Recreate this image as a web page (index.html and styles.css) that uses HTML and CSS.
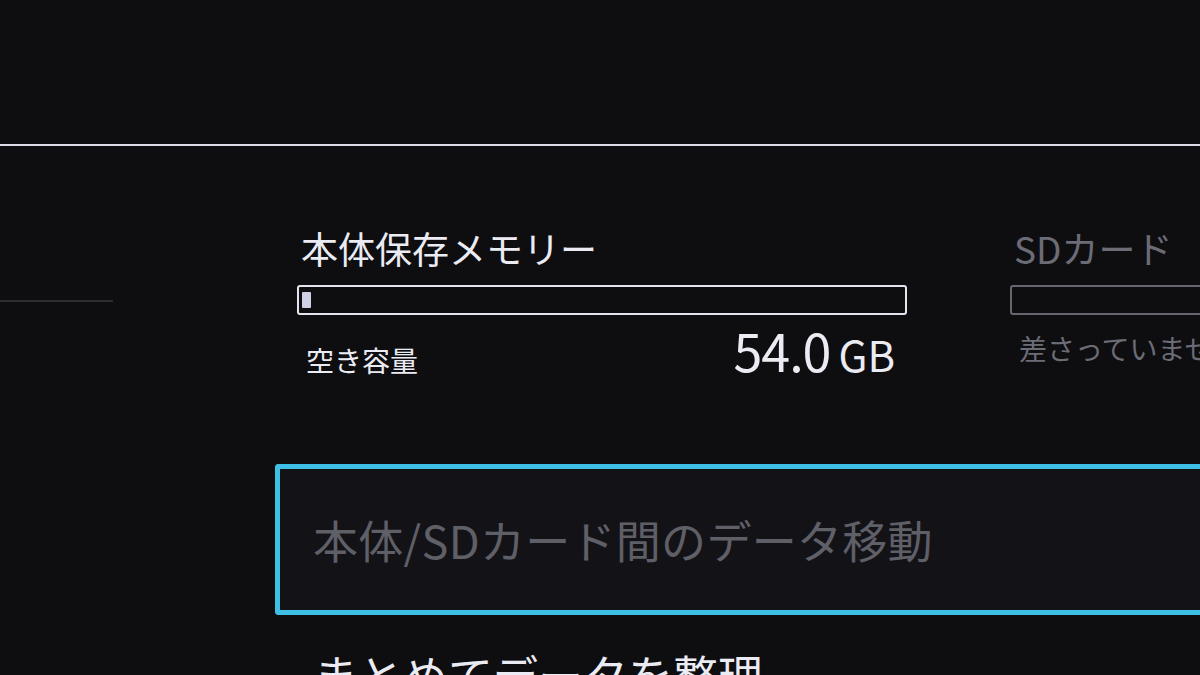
FILE: index.html
```html
<!DOCTYPE html>
<html lang="ja">
<head>
<meta charset="utf-8">
<link rel="stylesheet" href="styles.css">
</head>
<body>
<div class="screen">
  <header class="header"></header>
  <div class="rule"></div>
  <div class="content">
    <aside class="sidebar">
      <div class="side-divider"></div>
    </aside>
    <main class="main">
      <section class="storage">
        <div class="store">
          <div class="store-title">本体保存メモリー</div>
          <div class="bar"><div class="bar-fill" style="width: 9px"></div></div>
          <div class="free-row">
            <span class="free-label">空き容量</span>
            <span class="free-value"><span class="num">54.0</span><span class="unit">GB</span></span>
          </div>
        </div>
        <div class="store store-off">
          <div class="store-title">SDカード</div>
          <div class="bar"></div>
          <div class="free-row">
            <span class="free-label">差さっていません</span>
          </div>
        </div>
      </section>
      <div class="menu">
        <div class="menu-item selected">本体/SDカード間のデータ移動</div>
        <div class="menu-item">まとめてデータを整理</div>
      </div>
    </main>
  </div>
</div>
</body>
</html>
```

FILE: styles.css
```css
html, body {
  margin: 0;
  padding: 0;
  background: #0e0e11;
}
.screen {
  width: 1200px;
  height: 675px;
  overflow: hidden;
  background: #0e0e11;
  font-family: "Noto Sans CJK JP", "Noto Sans", sans-serif;
  color: #ebebf3;
}
.header {
  height: 144px;
}
.rule {
  height: 2px;
  background: #dcdce6;
}
.content {
  display: flex;
}
.sidebar {
  width: 297px;
  flex: none;
  padding-top: 154px;
  box-sizing: border-box;
}
.side-divider {
  width: 113px;
  height: 2px;
  background: #2c2c33;
}
.main {
  flex: none;
  width: 903px;
}
.storage {
  display: flex;
  gap: 103px;
  padding-top: 80px;
}
.store {
  width: 610px;
  flex: none;
}
.store-title {
  font-size: 37px;
  line-height: 44px;
  padding-left: 4px;
  white-space: nowrap;
}
.bar {
  margin-top: 15px;
  height: 30px;
  box-sizing: border-box;
  border: 2px solid #e4e4ee;
  border-radius: 3px;
  padding: 5px 3px;
}
.bar-fill {
  height: 100%;
  background: #cfcfe6;
  border-radius: 1px;
}
.free-row {
  margin-top: 15px;
  height: 50px;
  display: flex;
  align-items: baseline;
  justify-content: space-between;
  padding: 0 12px 0 9px;
  white-space: nowrap;
}
.free-label {
  font-size: 28px;
  line-height: 36px;
}
.free-value {
  display: flex;
  align-items: baseline;
  gap: 8px;
  line-height: 40px;
}
.num {
  font-size: 52px;
  letter-spacing: -1px;
}
.unit {
  font-size: 42px;
}
.store-off {
  color: #6c6c76;
}
.store-off .bar {
  border-color: #66666e;
}
.menu {
  margin-top: 84px;
  margin-left: -22px;
}
.menu-item {
  font-size: 45px;
  line-height: 54px;
  padding-left: 38px;
  white-space: nowrap;
}
.menu-item.selected {
  height: 151px;
  box-sizing: border-box;
  border: 5px solid #3ebfe6;
  border-right: none;
  border-radius: 4px 0 0 4px;
  background: #131317;
  color: #5f5f68;
  display: flex;
  align-items: center;
  padding-left: 33px;
  margin-bottom: 33px;
  margin-right: -30px;
  letter-spacing: 0.3px;
}
```
